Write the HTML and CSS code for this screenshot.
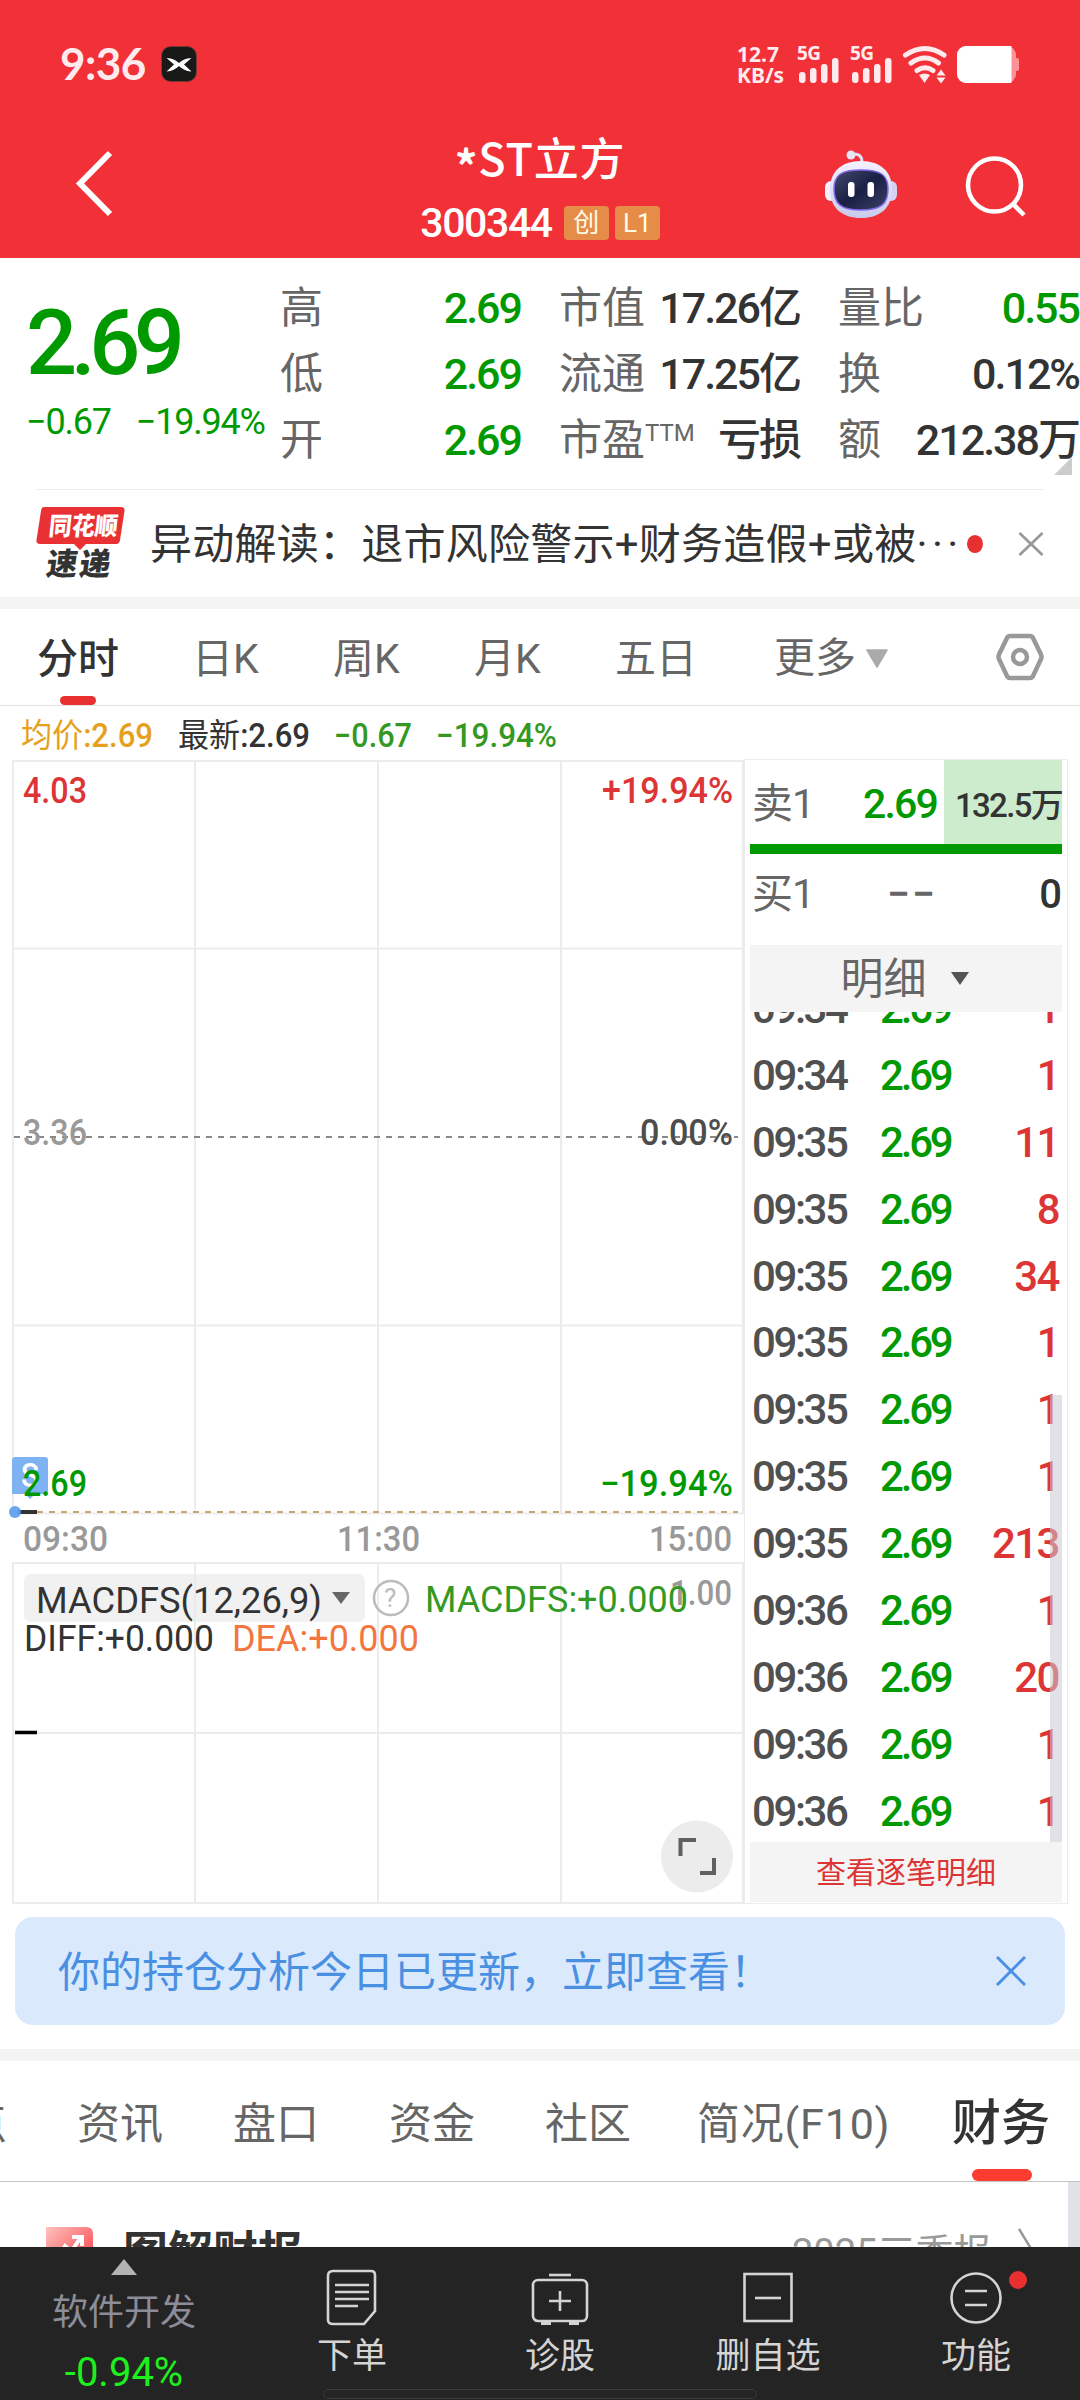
FILE: index.html
```html
<!DOCTYPE html>
<html lang="zh-CN">
	<head>
		<meta charset="UTF-8">
		<title>*ST立方 300344</title>
		<link rel="stylesheet" href="styles.css">
	</head>
	<body>
		<div class="header">
			<div class="status">
				<span class="clock">9:36</span>
				<svg class="app" width="36" height="36" viewBox="0 0 36 36">
					<rect x=".5" y=".5" width="35" height="35" rx="9" fill="#191917" stroke="#7a3a38"/>
					<path d="M5.500 12 C11 12 16 15 18 17 C20 15 25 12 30.500 12 L23 18.500 L30.500 25.500 C25 25.500 20 22 18 20 C16 22 11 25.500 5.500 25.500 L13 18.500Z" fill="#fff"/>
				</svg>
				<div class="speed"><span>12.7</span><span>KB/s</span></div>
				<svg class="signals" width="226" height="38" viewBox="0 0 226 38">
					<g fill="#ffebed">
						<text x="0" y="14" class="net" textLength="24">5G</text>
						<rect x="2" y="26" width="6.500" height="11" rx="3"/>
						<rect x="13" y="22" width="6.500" height="15" rx="3"/>
						<rect x="24" y="18" width="6.500" height="19" rx="3"/>
						<rect x="35" y="12" width="6.500" height="25" rx="3"/>
						<text x="53" y="14" class="net" textLength="24">5G</text>
						<rect x="55" y="26" width="6.500" height="11" rx="3"/>
						<rect x="66" y="22" width="6.500" height="15" rx="3"/>
						<rect x="77" y="18" width="6.500" height="19" rx="3"/>
						<rect x="88" y="12" width="6.500" height="25" rx="3"/>
						<path d="M122 29 q6 -3 11 0 l-5.500 8z"/>
						<path d="M139.500 29.500 l4.500 -6 l4.500 6z M139.500 31.500 l4.500 6 l4.500 -6z"/>
					</g>
					<g fill="none" stroke="#ffebed" stroke-width="5" stroke-linecap="round">
						<path d="M108.500 9 Q128 -4 147 9"/>
						<path d="M114 17 Q128 7 141.500 17"/>
						<path d="M120 24.500 Q128 19 136 24.500"/>
					</g>
					<rect x="160" y="0" width="59" height="37" rx="9" fill="#fb9297"/>
					<rect x="216" y="12" width="6" height="13" rx="2" fill="#fb9297"/>
					<path d="M169 0 H214.500 V37 H169 A9 9 0 0 1 160 28 V9 A9 9 0 0 1 169 0Z" fill="#fff"/>
				</svg>
			</div>
			<div class="nav">
				<svg class="back" width="40" height="70" viewBox="0 0 40 70"><path d="M36 4 L6 34.500 L36 65" fill="none" stroke="#fff" stroke-width="6"/></svg>
				<div class="title">
					<div class="name"><span class="star">*</span>ST立方</div>
					<div class="code"><b>300344</b><i>创</i><i>L1</i></div>
				</div>
				<svg class="robot" width="74" height="70" viewBox="0 0 74 70">
					<defs>
						<linearGradient id="shell" x1="0" y1="0" x2="0" y2="1"><stop offset="0" stop-color="#f4f1ff"/><stop offset="1" stop-color="#c9cbed"/></linearGradient>
						<linearGradient id="face" x1="0" y1="0" x2="1" y2="1"><stop offset="0" stop-color="#44496f"/><stop offset=".5" stop-color="#1a2043"/><stop offset="1" stop-color="#3b4068"/></linearGradient>
					</defs>
					<path d="M28 4 Q38 3 38 12" fill="none" stroke="#e6e3f7" stroke-width="3"/>
					<circle cx="27" cy="5" r="4.500" fill="#e6e3f7"/>
					<rect x="1" y="31" width="12" height="20" rx="6" fill="#f3f1ff"/>
					<rect x="61" y="31" width="12" height="20" rx="6" fill="#d3d2f4"/>
					<path d="M37 11 C57 11 68 22 68 39 C68 58 56 68 37 68 C18 68 6 58 6 39 C6 22 17 11 37 11Z" fill="url(#shell)"/>
					<path d="M37 20 C57 20 64 25 64 39 C64 54 57 60 37 60 C17 60 10 54 10 39 C10 25 17 20 37 20Z" fill="url(#face)" stroke="#8268e6" stroke-width="1.500"/>
					<rect x="24" y="32" width="6.500" height="15" rx="3" fill="#fff"/>
					<rect x="43.500" y="32" width="6.500" height="15" rx="3" fill="#fff"/>
				</svg>
				<svg class="search" width="62" height="64" viewBox="0 0 62 64"><g fill="none" stroke="#fff" stroke-width="4.500"><circle cx="29.500" cy="30" r="26.500"/><path d="M48 49 L59 60"/></g></svg>
			</div>
		</div>

		<div class="quote">
			<div class="price">
				<div class="now">2.69</div>
				<div class="change"><span>−0.67</span><span class="pct">−19.94%</span></div>
			</div>
			<div class="grid">
				<span>高</span><b class="green">2.69</b><span>市值</span><b>17.26亿</b><span>量比</span><b class="green">0.55</b>
				<span>低</span><b class="green">2.69</b><span>流通</span><b>17.25亿</b><span>换</span><b>0.12%</b>
				<span>开</span><b class="green">2.69</b><span>市盈<sup>TTM</sup></span><b>亏损</b><span>额</span><b>212.38万</b>
			</div>
			<div class="corner"></div>
		</div>

		<div class="news">
			<svg width="90" height="76" viewBox="0 0 90 76">
				<path d="M8 1 H85 Q89 1 88.500 5 L84 34 Q83.500 38 80 38 H50 L44 44 L38 38 H4 Q0 38 .5 34 L5 5 Q5.500 1 8 1Z" fill="#e93033"/>
				<text x="13" y="29" class="logo1" textLength="69" lengthAdjust="spacingAndGlyphs" transform="skewX(-6) translate(2 0)">同花顺</text>
				<text x="13" y="69" class="logo2" textLength="64" transform="skewX(-8) translate(6 0)">速递</text>
			</svg>
			<span class="headline">异动解读：退市风险警示+财务造假+或被<em>···</em></span>
			<i class="dot"></i>
			<svg class="close" width="26" height="26" viewBox="0 0 26 26"><path d="M1.500 2 L24.500 24 M24.500 2 L1.500 24" stroke="#999" stroke-width="2.800"/></svg>
		</div>

		<div class="periods">
			<span class="on">分时</span>
			<span>日K</span>
			<span>周K</span>
			<span>月K</span>
			<span>五日</span>
			<span class="more">更多<svg width="22" height="19" viewBox="0 0 22 19"><path d="M1 1 H21 L11 18Z" fill="#aaa" stroke="#aaa" stroke-width="1.500" stroke-linejoin="round"/></svg></span>
			<svg class="gear" width="48" height="48" viewBox="0 0 48 48"><g fill="none" stroke="#999" stroke-width="4.500"><path d="M14 3 H34 Q36 3 37 5 L45 21.500 Q46 24 45 26 L37 43 Q36 45 34 45 H14 Q12 45 11 43 L3 26 Q2 24 3 21.500 L11 5 Q12 3 14 3Z"/><circle cx="24" cy="24" r="7"/></g></svg>
		</div>

		<div class="market">
			<div class="left">
				<!-- intraday chart, origin is page (0, 706) -->
				<svg class="chart" width="744" height="1200" viewBox="0 706 744 1200">
					<g class="info">
						<text x="21" y="747" fill="#e5a11d" textLength="132" lengthAdjust="spacingAndGlyphs">均价<tspan>:2.69</tspan></text>
						<text x="178" y="747" fill="#333" textLength="132" lengthAdjust="spacingAndGlyphs">最新<tspan>:2.69</tspan></text>
						<text x="334" y="747" fill="#339922" textLength="78" lengthAdjust="spacingAndGlyphs"><tspan>−0.67</tspan></text>
						<text x="436" y="747" fill="#339922" textLength="121" lengthAdjust="spacingAndGlyphs"><tspan>−19.94%</tspan></text>
					</g>
					<g fill="none" stroke="#ececec" stroke-width="2">
						<path d="M13 761 H744 M13 948.500 H744 M13 1325.500 H744 M13 1513.500 H744"/>
						<path d="M13 760 V1514 M195 760 V1514 M378 760 V1514 M561 760 V1514 M743 760 V1514"/>
						<path d="M13 1563 H744 M13 1733 H744 M13 1903 H744"/>
						<path d="M13 1562 V1904 M195 1562 V1904 M378 1562 V1904 M561 1562 V1904 M743 1562 V1904"/>
					</g>
					<path d="M14 1137 H738" stroke="#888" stroke-width="2" stroke-dasharray="6 6"/>
					<path d="M37 1512 H738" stroke="#c6a671" stroke-width="2" stroke-dasharray="6 6"/>
					<path d="M15 1457 H45 Q48 1457 48 1460 V1491 Q48 1494 45 1494 H35 L30 1499 L25 1494 H12 V1460 Q12 1457 15 1457Z" fill="#7fb2f2"/>
					<text x="21" y="1487" fill="#fff" font-size="33" font-weight="500" textLength="18" lengthAdjust="spacingAndGlyphs">S</text>
					<path d="M18 1512 H37" stroke="#333" stroke-width="4"/>
					<circle cx="15" cy="1512" r="6" fill="#5b9bea" fill-opacity=".9"/>
					<g class="axis">
						<text x="23" y="803" fill="#dd3535" textLength="64" lengthAdjust="spacingAndGlyphs">4.03</text>
						<text x="602" y="803" fill="#dd3535" textLength="131" lengthAdjust="spacingAndGlyphs">+19.94%</text>
						<text x="23" y="1145" fill="#999" textLength="64" lengthAdjust="spacingAndGlyphs">3.36</text>
						<text x="640" y="1145" fill="#4d4d4d" textLength="93" lengthAdjust="spacingAndGlyphs">0.00%</text>
						<text x="23" y="1496" fill="#009900" textLength="64" lengthAdjust="spacingAndGlyphs">2.69</text>
						<text x="600" y="1496" fill="#009900" textLength="133" lengthAdjust="spacingAndGlyphs">−19.94%</text>
					</g>
					<g class="time" fill="#999">
						<text x="23" y="1551" textLength="85" lengthAdjust="spacingAndGlyphs">09:30</text>
						<text x="337" y="1551" textLength="83" lengthAdjust="spacingAndGlyphs">11:30</text>
						<text x="649" y="1551" textLength="83" lengthAdjust="spacingAndGlyphs">15:00</text>
						<text x="670" y="1605" textLength="62" lengthAdjust="spacingAndGlyphs">1.00</text>
					</g>
					<rect x="24" y="1574" width="341" height="48" rx="7" fill="#e9e9e9" fill-opacity=".65"/>
					<g class="macd">
						<text x="36" y="1613" fill="#333" textLength="286" lengthAdjust="spacingAndGlyphs">MACDFS(12,26,9)</text>
						<path d="M332 1592 H350 L341 1604Z" fill="#666"/>
						<circle cx="391" cy="1598" r="17" fill="none" stroke="#bbb" stroke-width="2.500"/>
						<text x="384" y="1607" class="help">?</text>
						<text x="425" y="1612" fill="#339922" textLength="263" lengthAdjust="spacingAndGlyphs">MACDFS:+0.000</text>
						<text x="24" y="1651" fill="#333" textLength="190" lengthAdjust="spacingAndGlyphs">DIFF:+0.000</text>
						<text x="232" y="1651" fill="#f4763f" textLength="187" lengthAdjust="spacingAndGlyphs">DEA:+0.000</text>
					</g>
					<path d="M15 1732.500 H37" stroke="#000" stroke-width="3.500"/>
					<circle cx="697" cy="1856.500" r="36" fill="#ececec"/>
					<path d="M680.500 1856 V1840 H696 M700 1873 H714 V1858" fill="none" stroke="#606060" stroke-width="4"/>
				</svg>
			</div>
			<div class="book">
				<div class="order sell"><span>卖1</span><b class="green">2.69</b><em>132.5万</em></div>
				<div class="ratio"></div>
				<div class="order buy"><span>买1</span><b>−−</b><em>0</em></div>
				<div class="mode">明细<svg width="18" height="13" viewBox="0 0 18 13"><path d="M0 0 H18 L9 13Z" fill="#555"/></svg></div>
				<div class="ticks">
					<div class="tick"><span>09:34</span><b>2.69</b><em>1</em></div>
					<div class="tick"><span>09:34</span><b>2.69</b><em>1</em></div>
					<div class="tick"><span>09:35</span><b>2.69</b><em>11</em></div>
					<div class="tick"><span>09:35</span><b>2.69</b><em>8</em></div>
					<div class="tick"><span>09:35</span><b>2.69</b><em>34</em></div>
					<div class="tick"><span>09:35</span><b>2.69</b><em>1</em></div>
					<div class="tick"><span>09:35</span><b>2.69</b><em>1</em></div>
					<div class="tick"><span>09:35</span><b>2.69</b><em>1</em></div>
					<div class="tick"><span>09:35</span><b>2.69</b><em>213</em></div>
					<div class="tick"><span>09:36</span><b>2.69</b><em>1</em></div>
					<div class="tick"><span>09:36</span><b>2.69</b><em>20</em></div>
					<div class="tick"><span>09:36</span><b>2.69</b><em>1</em></div>
					<div class="tick"><span>09:36</span><b>2.69</b><em>1</em></div>
					<div class="scroll"></div>
				</div>
				<div class="all">查看逐笔明细</div>
			</div>
		</div>

		<div class="banner">
			<span>你的持仓分析今日已更新，立即查看！</span>
			<svg width="30" height="30" viewBox="0 0 30 30"><path d="M1 1 L29 29 M29 1 L1 29" stroke="#4a90e2" stroke-width="3"/></svg>
		</div>

		<div class="tabs">
			<span>热点</span>
			<span>资讯</span>
			<span>盘口</span>
			<span>资金</span>
			<span>社区</span>
			<span>简况(F10)</span>
			<span class="on">财务</span>
		</div>

		<div class="report">
			<svg width="47" height="47" viewBox="0 0 47 47">
				<defs><linearGradient id="ic" x1="0" y1="0" x2="1" y2="1"><stop offset="0" stop-color="#ffc2c0"/><stop offset="1" stop-color="#fb3338"/></linearGradient></defs>
				<path d="M0 0 H40 Q47 0 47 7 V47 H0Z" fill="url(#ic)"/>
				<path d="M10 32 L19 19 L25 25 L35 10 M26 10 H36 V19" fill="none" stroke="#fff" stroke-width="4"/>
			</svg>
			<b>图解财报</b>
			<span>2025三季报</span>
			<svg class="arrow" width="14" height="40" viewBox="0 0 14 40"><path d="M1 2 L12 20 L1 38" fill="none" stroke="#999" stroke-width="2.500"/></svg>
		</div>

		<div class="bottom">
			<div class="index">
				<svg width="26" height="16" viewBox="0 0 26 16"><path d="M0 16 L13 0 L26 16Z" fill="#b3b3b3"/></svg>
				<span>软件开发</span>
				<b>-0.94%</b>
			</div>
			<div class="item">
				<svg width="58" height="58" viewBox="0 0 58 58"><g fill="none" stroke="#d4d4d4" stroke-width="2.600"><path d="M10 3 H48 Q52 3 52 7 V43 L41 56 H10 Q5 56 5 52 V8 Q5 3 10 3Z"/><path d="M12 17 H46 M12 24 H46 M12 31 H46 M12 38 H35"/></g></svg>
				<span>下单</span>
			</div>
			<div class="item">
				<svg width="58" height="58" viewBox="0 0 58 58"><g fill="none" stroke="#d4d4d4" stroke-width="2.600"><rect x="2" y="12" width="54" height="41" rx="5"/><path d="M18 7 H40"/><path d="M18 33 H40 M29 23 V43"/><path d="M10 55 H20 M38 55 H48" stroke-width="4"/></g></svg>
				<span>诊股</span>
			</div>
			<div class="item">
				<svg width="58" height="58" viewBox="0 0 58 58"><g fill="none" stroke="#d4d4d4" stroke-width="2.600"><rect x="5.500" y="6" width="47" height="47"/><path d="M16 30 H42"/></g></svg>
				<span>删自选</span>
			</div>
			<div class="item">
				<svg width="58" height="58" viewBox="0 0 58 58"><g fill="none" stroke="#d4d4d4" stroke-width="2.600"><circle cx="29" cy="30" r="24.500"/><path d="M18 23 H40 M18 37 H40"/></g></svg>
				<span>功能</span>
				<i></i>
			</div>
			<div class="home"></div>
		</div>
	</body>
</html>
```

FILE: styles.css
```css
*{
	box-sizing: border-box;
	padding: 0;
	margin: 0;
}
body{
	display: flex;
	flex-direction: column;
	width: 1080px;
	height: 2400px;
	overflow: hidden;
	background: #fff;
	color: #333;
	font-family: Roboto, "Noto Sans CJK SC", sans-serif;
}
svg{
	display: block;
	flex: none;
}
i, em{
	font-style: normal;
}
b{
	font-weight: 500;
}
span, b, em{
	white-space: nowrap;
}
.green{
	color: #009900;
}

/* header */
.header{
	flex: none;
	height: 258px;
	background: #f23038;
	color: #fff;
}
.status{
	display: flex;
	height: 128px;
	padding: 46px 0 0 60px;
}
.clock{
	width: 101px;
	margin-top: -2px;
	font: 700 44px/38px Lato, sans-serif;
	letter-spacing: -.500px;
	color: #ffebed;
}
.speed{
	display: flex;
	flex-direction: column;
	width: 60px;
	margin: -2px 0 0 540px;
	font: 700 21px/21px "Noto Sans", sans-serif;
	color: #ffebed;
}
.signals{
	overflow: visible;
}
.net{
	font: 700 19px "Noto Sans", sans-serif;
}
.nav{
	display: flex;
	height: 130px;
	padding-left: 74px;
}
.back{
	margin-top: 21px;
}
.title{
	width: 300px;
	margin-left: 276px;
	text-align: center;
}
.name{
	height: 62px;
	font-size: 45px;
	line-height: 58px;
	font-weight: 500;
	font-family: "Noto Sans CJK SC", sans-serif;
	letter-spacing: .800px;
}
.star{
	position: relative;
	top: 8px;
	font-weight: 700;
}
.code{
	display: flex;
	justify-content: center;
	align-items: center;
	gap: 6px;
	height: 65px;
}
.code b{
	margin-right: 6px;
	font-size: 41px;
	letter-spacing: -1.400px;
}
.code i{
	width: 45px;
	height: 34px;
	border-radius: 4px;
	background: #e58d48;
	color: #fffbe6;
	font-size: 26px;
	line-height: 34px;
}
.robot{
	margin: 22px 0 0 134px;
}
.search{
	margin: 27px 0 0 67px;
}

/* quote */
.quote{
	position: relative;
	flex: none;
	display: flex;
	height: 231px;
}
.price{
	width: 280px;
	padding-left: 26px;
	color: #009900;
}
.now{
	height: 110px;
	margin-top: 31px;
	font-size: 90px;
	line-height: 110px;
	font-weight: 500;
	letter-spacing: -6.500px;
}
.change{
	display: flex;
	height: 44px;
	margin-top: 1px;
	font-size: 36px;
	line-height: 44px;
	letter-spacing: -1.200px;
}
.change .pct{
	margin-left: 25px;
}
.grid{
	display: grid;
	grid-template-columns: 108px 133px 124px 155px 84px 195px;
	grid-template-rows: repeat(3, 66px);
	width: 799px;
	margin-top: 17px;
	line-height: 66px;
}
.grid span{
	color: #666;
	font-size: 43px;
}
.grid b{
	text-align: right;
	font-size: 43px;
	letter-spacing: -2px;
}
.grid span:nth-child(6n+3), .grid span:nth-child(6n+5){
	padding-left: 38px;
}
.grid sup{
	position: relative;
	top: -14px;
	font-size: 24px;
	line-height: 1;
	vertical-align: baseline;
}
.corner{
	position: absolute;
	right: 8px;
	bottom: 14px;
	border-left: 18px solid transparent;
	border-bottom: 18px solid #ccc;
}

/* news */
.news{
	flex: none;
	display: flex;
	align-items: center;
	height: 108px;
	margin: 0 36px;
	border-top: 1px solid #ececec;
}
.logo1{
	fill: #fff;
	font: 900 25px "Noto Sans CJK SC", sans-serif;
}
.logo2{
	fill: #333;
	font: 900 31px "Noto Sans CJK SC", sans-serif;
}
.headline{
	margin-left: 24px;
	padding-top: 3px;
	width: 813px;
	font-size: 42px;
	line-height: 60px;
	letter-spacing: .250px;
}
.headline em{
	letter-spacing: 4.500px;
}
.dot{
	width: 18px;
	height: 18px;
	margin-left: 4px;
	border-radius: 50%;
	background: #e93030;
}
.close{
	margin-left: 35px;
}

/* period tabs */
.periods{
	position: relative;
	flex: none;
	display: flex;
	height: 109px;
	border-top: 12px solid #f4f4f4;
	border-bottom: 1px solid #e2e2e2;
	padding-left: 37px;
	font-size: 41px;
	line-height: 101px;
	color: #666;
}
.periods span{
	width: 141px;
	padding-left: 14px;
}
.periods .on{
	position: relative;
	padding: 0;
	font-weight: 500;
	color: #333;
}
.periods .on::after{
	content: "";
	position: absolute;
	left: 23px;
	bottom: 0;
	width: 36px;
	height: 9px;
	border-radius: 5px;
	background: #e93030;
}
.periods .more{
	display: flex;
	align-items: center;
	width: 236px;
	padding: 2px 0 0 32px;
	gap: 10px;
}
.gear{
	margin: 24px 0 0 18px;
}

/* chart and order book */
.market{
	flex: none;
	display: flex;
	height: 1200px;
}
.left{
	width: 744px;
}
.chart .info{
	font-size: 33px;
}
.chart .info tspan{
	font-weight: 500;
}
.chart .axis{
	font-size: 36px;
	font-weight: 500;
}
.chart .time{
	font-size: 35px;
	font-weight: 500;
}
.chart .macd{
	font-size: 36px;
}
.chart .help{
	font-size: 26px;
	fill: #bbb;
}
.book{
	display: flex;
	flex-direction: column;
	width: 324px;
	height: 1145px;
	margin-top: 53px;
	padding: 0 5px;
	border: 1px solid #ececec;
}
.order{
	display: flex;
	height: 84px;
	line-height: 88px;
	font-size: 41px;
	color: #666;
}
.order span{
	width: 84px;
	padding-left: 2px;
	letter-spacing: -1px;
}
.order b{
	width: 103px;
	text-align: right;
	letter-spacing: -1.800px;
}
.order em{
	width: 125px;
	text-align: right;
	color: #333;
	font-weight: 500;
	font-size: 40px;
}
.sell em{
	width: 118px;
	margin-left: 7px;
	background: #cdebcd;
	font-size: 33px;
	letter-spacing: -1.700px;
	line-height: 92px;
}
.ratio{
	flex: none;
	height: 10px;
	background: #009900;
}
.buy{
	height: 91px;
	line-height: 81px;
}
.buy b{
	letter-spacing: 2px;
}
.mode{
	display: flex;
	flex: none;
	justify-content: center;
	align-items: center;
	gap: 24px;
	height: 67px;
	padding-right: 3px;
	line-height: 60px;
	background: #f4f4f4;
	color: #666;
	font-size: 43px;
}
.ticks{
	position: relative;
	flex: none;
	height: 830px;
	overflow: hidden;
}
.tick{
	display: flex;
	height: 66.900px;
	line-height: 68px;
	font-size: 42px;
	font-weight: 500;
}
.tick:first-child{
	margin-top: -37px;
}
.tick span{
	width: 130px;
	padding-left: 2px;
	letter-spacing: -2.400px;
	color: #505050;
}
.tick b{
	width: 91px;
	color: #009900;
	letter-spacing: -3.200px;
}
.tick em{
	width: 88px;
	text-align: right;
	color: #dd3535;
	letter-spacing: -1.500px;
}
.scroll{
	position: absolute;
	right: 0;
	top: 383px;
	width: 12px;
	height: 447px;
	background: rgba(200,200,210,.55);
}
.all{
	height: 60px;
	line-height: 61px;
	background: #f4f4f4;
	color: #dd3535;
	font-size: 30px;
	text-align: center;
}

/* banner */
.banner{
	flex: none;
	display: flex;
	justify-content: space-between;
	align-items: center;
	height: 108px;
	margin: 11px 15px 24px;
	padding: 0 39px 0 43px;
	border-radius: 18px;
	background: #dae9fc;
	color: #4a90e2;
	font-size: 42px;
}
.banner span{
	padding-bottom: 5px;
}

/* section tabs */
.tabs{
	flex: none;
	display: flex;
	height: 133px;
	border-top: 12px solid #f4f4f4;
	border-bottom: 1px solid #c4c4c8;
	font-size: 43px;
	line-height: 126px;
	color: #666;
}
.tabs span{
	flex: none;
	width: 156px;
}
.tabs span:first-child{
	margin-left: -79px;
}
.tabs span:nth-child(6){
	width: 256px;
	margin-left: -4px;
	letter-spacing: .800px;
}
.tabs .on{
	position: relative;
	width: 126px;
	margin-left: -1px;
	font-size: 49px;
	font-weight: 500;
	color: #333;
}
.tabs .on::after{
	content: "";
	position: absolute;
	left: 20px;
	bottom: 0;
	width: 60px;
	height: 12px;
	border-radius: 6px;
	background: #fc3c30;
}
.report{
	flex: none;
	display: flex;
	height: 65px;
	padding: 45px 0 0 46px;
	border-right: 12px solid #e1e1e7;
	overflow: hidden;
}
.report b{
	width: 669px;
	margin-left: 30px;
	font-size: 45px;
	line-height: 53px;
	font-weight: 700;
}
.report span{
	width: 226px;
	font-size: 38px;
	line-height: 52px;
	color: #999;
}

/* bottom bar */
.bottom{
	position: relative;
	flex: none;
	display: flex;
	height: 153px;
	background: #242424;
}
.index{
	display: flex;
	flex-direction: column;
	align-items: center;
	width: 248px;
	padding: 12px 0 0;
}
.index span{
	height: 66px;
	margin-top: 3px;
	line-height: 70px;
	font-size: 36px;
	color: #8d8d99;
}
.index b{
	line-height: 58px;
	font-size: 40px;
	font-weight: 400;
	color: #1df01d;
}
.item{
	position: relative;
	display: flex;
	flex-direction: column;
	align-items: center;
	width: 208px;
	padding-top: 21px;
	font-size: 35px;
	line-height: 61px;
	color: #d4d4d4;
}
.item i{
	position: absolute;
	left: 137px;
	top: 24px;
	width: 18px;
	height: 18px;
	border-radius: 50%;
	background: #e93030;
}
.home{
	position: absolute;
	left: 323px;
	bottom: 1px;
	width: 434px;
	height: 10px;
	border: 1px solid #3a3a3a;
	border-radius: 5px;
}
```
